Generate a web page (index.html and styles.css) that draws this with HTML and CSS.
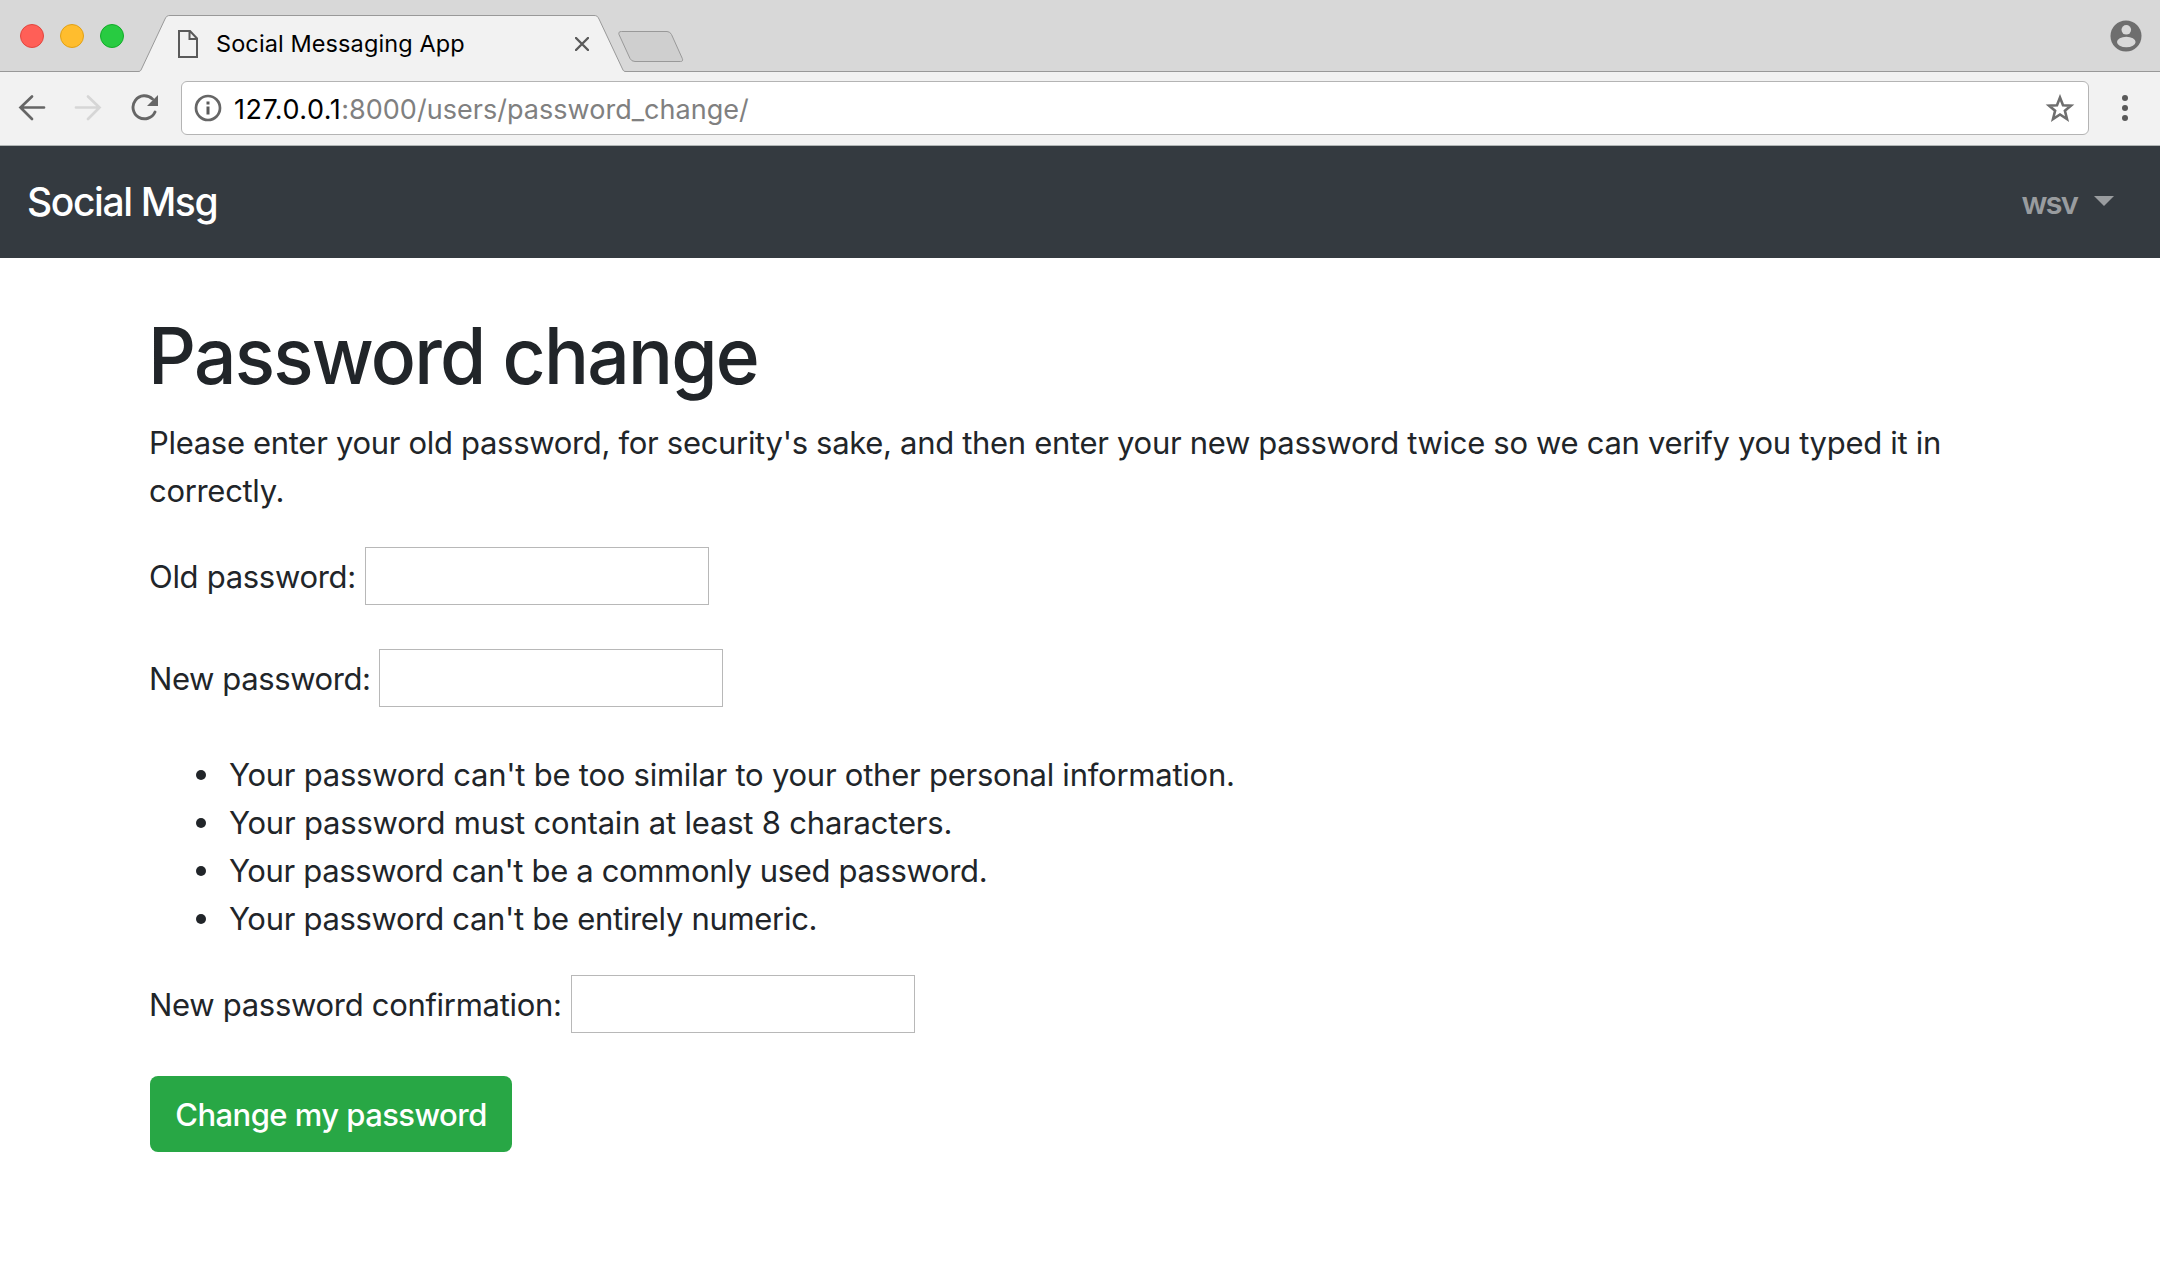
FILE: index.html
```html
<!DOCTYPE html>
<html lang="en">
<head>
<meta charset="utf-8">
<title>Social Messaging App</title>
<link rel="stylesheet" href="styles.css">
</head>
<body>
<header class="tabstrip">
  <div class="lights"><span class="light red"></span><span class="light yellow"></span><span class="light green"></span></div>
  <div class="tab">
    <svg class="tab-shape" width="488" height="58" viewBox="0 0 488 58"><path d="M0 57.5 C2 57.5 2.600 57 3.500 55 L27 5 C28.500 2 29.500 1.500 32 1.500 H456 C458.500 1.500 459.500 2 461 5 L484.500 55 C485.400 57 486 57.500 488 57.500 V58 H0Z" fill="#f2f2f2"/><path d="M0 57.5 C2 57.5 2.600 57 3.500 55 L27 5 C28.500 2 29.500 1.500 32 1.500 H456 C458.500 1.500 459.500 2 461 5 L484.500 55 C485.400 57 486 57.500 488 57.500" fill="none" stroke="#999"/></svg>
    <svg class="tab-page" width="20" height="28" viewBox="0 0 20 28"><path d="M1 1 H12 L19 8.500 V27 H1Z M11.500 1 V9 H19" fill="none" stroke="#5a5a5a" stroke-width="2"/></svg>
    <span class="tab-title">Social Messaging App</span>
    <svg class="tab-close" width="14" height="14" viewBox="0 0 14 14"><path d="M1 1 L13 13 M13 1 L1 13" stroke="#5a5a5a" stroke-width="2.400" stroke-linecap="round"/></svg>
  </div>
  <svg class="new-tab" width="66" height="32" viewBox="0 0 66 32"><path d="M3.500 .5 H49 Q52 .5 53.500 3.500 L64.300 27.500 Q65.500 30.500 62.500 30.500 H17 Q13.500 30.500 12 27.500 L1 3.500 Q0 .5 3.500 .5Z" fill="#cfcfcf" stroke="#999"/></svg>
  <svg class="profile" width="32" height="32" viewBox="0 0 32 32"><circle cx="16" cy="16" r="15.500" fill="#6e6e6e"/><circle cx="16.300" cy="9.800" r="4.800" fill="#d8d8d8"/><ellipse cx="16.300" cy="22" rx="9.300" ry="5.200" fill="#d8d8d8"/></svg>
</header>
<div class="toolbar">
  <svg class="back" width="28" height="28" viewBox="0 0 28 28"><path d="M14 2.500 L2.500 13.500 L14 25 M2.500 13.500 H26" fill="none" stroke="#666" stroke-width="2.700" stroke-linecap="round"/></svg>
  <svg class="forward" width="28" height="28" viewBox="0 0 28 28"><path d="M14 2.500 L25.500 13.500 L14 25 M25.500 13.500 H2" fill="none" stroke="#d6d6d6" stroke-width="2.700" stroke-linecap="round"/></svg>
  <svg class="reload" width="28" height="28" viewBox="0 0 28 28"><path d="M21.500 5 A11.500 11.500 0 1 0 24 18" fill="none" stroke="#666" stroke-width="2.900" stroke-linecap="round"/><path d="M27 1 V12 H16Z" fill="#666"/></svg>
  <div class="omnibox">
    <svg class="info" width="28" height="28" viewBox="0 0 28 28"><circle cx="14" cy="14" r="12" fill="none" stroke="#666" stroke-width="2.700"/><path d="M12.500 7.500h3v3h-3z M12.500 12.500h3v8h-3z" fill="#5a5a5a"/></svg>
    <div class="url"><span class="host">127.0.0.1</span><span class="path">:8000/users/password_change/</span></div>
    <svg class="star" width="30" height="29" viewBox="0 0 30 29"><path d="M15 3.500 L18 11.200 L26 11.600 L19.900 16.800 L22 25 L15 20.500 L8 25 L10.100 16.800 L4 11.600 L12 11.200Z" fill="none" stroke="#6e6e6e" stroke-width="2.600"/></svg>
  </div>
  <svg class="menu" width="6" height="28" viewBox="0 0 6 28"><g fill="#5a5a5a"><circle cx="3" cy="4" r="3"/><circle cx="3" cy="14" r="3"/><circle cx="3" cy="24" r="3"/></g></svg>
</div>
<nav class="navbar">
  <a class="brand">Social Msg</a>
  <a class="user"><span class="user-name">wsv</span><i class="caret"></i></a>
</nav>
<main class="content">
  <h1 class="heading">Password change</h1>
  <p class="intro">Please enter your old password, for security's sake, and then enter your new password twice so we can verify you typed it in<br>correctly.</p>
  <form class="form">
    <div class="row"><label class="label label-old" for="old">Old password:</label><input class="field" id="old" type="password"></div>
    <div class="row"><label class="label label-new" for="new1">New password:</label><input class="field" id="new1" type="password"></div>
    <ul class="hints">
      <li class="hint">Your password can't be too similar to your other personal information.</li>
      <li class="hint">Your password must contain at least 8 characters.</li>
      <li class="hint">Your password can't be a commonly used password.</li>
      <li class="hint">Your password can't be entirely numeric.</li>
    </ul>
    <div class="row"><label class="label label-confirm" for="new2">New password confirmation:</label><input class="field" id="new2" type="password"></div>
    <button class="submit" type="button">Change my password</button>
  </form>
</main>
</body>
</html>
```
FILE: styles.css
```css
* { box-sizing: border-box; }
body { margin: 0; background: #fff; color: #212529; font-family: Inter, "Liberation Sans", sans-serif; font-size: 31px; line-height: 48px; }
svg { display: block; flex: none; }

.tabstrip { display: flex; height: 72px; background: #d8d8d8; border-bottom: 1px solid #999; }
.lights { display: flex; gap: 16px; padding: 24px 0 0 20px; width: 138px; }
.light { width: 24px; height: 24px; border-radius: 50%; border: 1px solid; }
.red { background: #ff5f57; border-color: #e2463f; }
.yellow { background: #ffbd2e; border-color: #e1a116; }
.green { background: #28cb41; border-color: #12ac28; }
.tab { position: relative; width: 488px; height: 58px; margin-top: 14px; display: flex; align-items: flex-start; padding-left: 40px; }
.tab-shape { position: absolute; left: 0; top: 0; }
.tab-page { position: relative; margin-top: 16px; }
.tab-title { position: relative; width: 359px; margin-left: 18px; padding-top: 14px; font-size: 23.5px; line-height: 32px; letter-spacing: .1px; color: #000; white-space: nowrap; }
.tab-close { position: relative; margin-top: 23px; }
.new-tab { margin: 31px 0 0 -8px; }
.profile { margin: 20px 18px 0 auto; }

.toolbar { display: flex; height: 74px; background: #f2f2f2; border-bottom: 1px solid #b0b5b5; padding: 9px 0 0 18px; }
.back, .forward, .reload { margin-top: 13px; }
.forward { margin-left: 28px; }
.reload { margin-left: 29px; }
.omnibox { display: flex; width: 1908px; height: 54px; margin-left: 22px; background: #fff; border: 1px solid #b4b4b4; border-radius: 6px; }
.info { margin: 12px 0 0 12px; }
.url { flex: 1; margin-left: 12px; font-size: 27px; line-height: 55px; letter-spacing: .03px; color: #808080; white-space: nowrap; }
.host { color: #000; letter-spacing: .5px; }
.star { margin: 12px 13px 0 0; }
.menu { margin: 13px 0 0 33px; }

.navbar { display: flex; justify-content: space-between; height: 112px; background: #343a40; padding: 0 46px 0 27px; }
.brand { color: #fff; font-size: 39px; font-weight: 500; line-height: 112px; letter-spacing: -1.4px; }
.user { display: flex; color: #999c9f; font-weight: 600; font-size: 31px; line-height: 114px; }
.user-name { letter-spacing: -1.9px; }
.caret { width: 20px; height: 10px; margin: 50px 0 0 17px; background: #999c9f; clip-path: polygon(0 0, 100% 0, 50% 100%); }

.content { padding: 48px 150px 0; }
.heading { margin: 0 0 14px -2px; padding-top: 2px; font-size: 78px; line-height: 96px; font-weight: 500; letter-spacing: -1.87px; transform: scaleX(.96); transform-origin: left; }
.intro { margin: 0 0 31px -1px; padding-top: 1px; white-space: nowrap; letter-spacing: -.31px; }
.row { display: flex; height: 70px; margin-bottom: 32px; padding-top: 1px; white-space: nowrap; }
.label { padding-top: 6px; margin-left: -1px; }
.label-old { width: 216px; letter-spacing: -.3px; }
.label-new { width: 230px; letter-spacing: -.4px; }
.label-confirm { width: 422px; letter-spacing: -.3px; }
.field { width: 344px; height: 58px; border: 1px solid #b8b8b8; background: #fff; }
.hints { margin: 0 0 31px; padding: 1px 0 0 46px; list-style: none; }
.hint { display: flex; white-space: nowrap; letter-spacing: -.24px; }
.hint:nth-child(2) { letter-spacing: -.2px; }
.hint:nth-child(3) { letter-spacing: -.35px; }
.hint:nth-child(4) { letter-spacing: -.31px; }
.hint::before { content: ""; width: 10px; height: 10px; margin: 19px 23px 0 0; border-radius: 50%; background: #212529; }
.submit { display: block; width: 362px; height: 76px; padding: 1px 0 0; border: 0; border-radius: 8px; background: #28a745; color: #fff; font: inherit; font-weight: 500; letter-spacing: -.55px; }
```
